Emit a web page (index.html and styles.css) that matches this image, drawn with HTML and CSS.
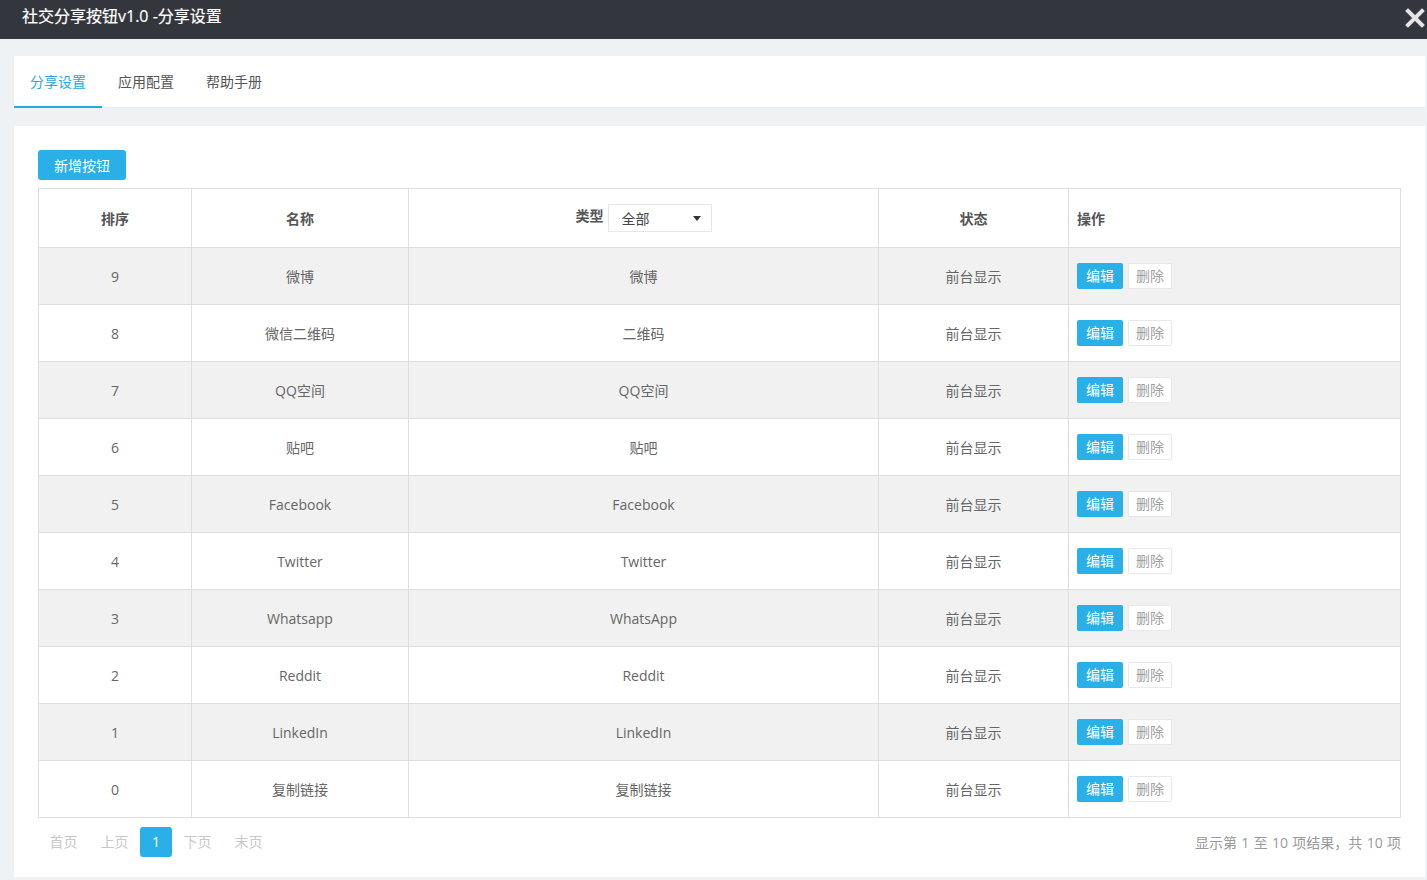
FILE: index.html
```html
<!DOCTYPE html>
<html lang="zh-CN">
<head>
<meta charset="utf-8">
<title>社交分享按钮v1.0 -分享设置</title>
<link rel="stylesheet" href="styles.css">
</head>
<body>
<header class="titlebar">
  <span class="title">社交分享按钮v1.0 -分享设置</span>
  <span class="close" aria-label="关闭">
    <svg width="20" height="20" viewBox="0 0 20 20"><path d="M3 3 L17 17 M17 3 L3 17" stroke="#e4e4e4" stroke-width="4" stroke-linecap="square"/></svg>
  </span>
</header>
<main class="wrap">
  <nav class="tabs">
    <a class="tab active">分享设置</a>
    <a class="tab">应用配置</a>
    <a class="tab">帮助手册</a>
  </nav>
  <section class="card">
    <button class="btn-add">新增按钮</button>
    <table class="grid">
      <colgroup>
        <col class="c1"><col class="c2"><col class="c3"><col class="c4"><col class="c5">
      </colgroup>
      <thead>
        <tr>
          <th>排序</th>
          <th>名称</th>
          <th><span class="type-label">类型</span><span class="select">全部<i class="caret"></i></span></th>
          <th>状态</th>
          <th class="left">操作</th>
        </tr>
      </thead>
      <tbody>
        <tr><td>9</td><td>微博</td><td>微博</td><td>前台显示</td><td class="left"><span class="btn-edit">编辑</span><span class="btn-del">删除</span></td></tr>
        <tr><td>8</td><td>微信二维码</td><td>二维码</td><td>前台显示</td><td class="left"><span class="btn-edit">编辑</span><span class="btn-del">删除</span></td></tr>
        <tr><td>7</td><td>QQ空间</td><td>QQ空间</td><td>前台显示</td><td class="left"><span class="btn-edit">编辑</span><span class="btn-del">删除</span></td></tr>
        <tr><td>6</td><td>贴吧</td><td>贴吧</td><td>前台显示</td><td class="left"><span class="btn-edit">编辑</span><span class="btn-del">删除</span></td></tr>
        <tr><td>5</td><td>Facebook</td><td>Facebook</td><td>前台显示</td><td class="left"><span class="btn-edit">编辑</span><span class="btn-del">删除</span></td></tr>
        <tr><td>4</td><td>Twitter</td><td>Twitter</td><td>前台显示</td><td class="left"><span class="btn-edit">编辑</span><span class="btn-del">删除</span></td></tr>
        <tr><td>3</td><td>Whatsapp</td><td>WhatsApp</td><td>前台显示</td><td class="left"><span class="btn-edit">编辑</span><span class="btn-del">删除</span></td></tr>
        <tr><td>2</td><td>Reddit</td><td>Reddit</td><td>前台显示</td><td class="left"><span class="btn-edit">编辑</span><span class="btn-del">删除</span></td></tr>
        <tr><td>1</td><td>LinkedIn</td><td>LinkedIn</td><td>前台显示</td><td class="left"><span class="btn-edit">编辑</span><span class="btn-del">删除</span></td></tr>
        <tr><td>0</td><td>复制链接</td><td>复制链接</td><td>前台显示</td><td class="left"><span class="btn-edit">编辑</span><span class="btn-del">删除</span></td></tr>
      </tbody>
    </table>
    <div class="footer">
      <div class="pager">
        <span class="pg">首页</span>
        <span class="pg">上页</span>
        <span class="pg current">1</span>
        <span class="pg">下页</span>
        <span class="pg">末页</span>
      </div>
      <div class="info">显示第 1 至 10 项结果，共 10 项</div>
    </div>
  </section>
</main>
</body>
</html>
```
FILE: styles.css
```css
* { box-sizing: border-box; }
html, body { margin: 0; padding: 0; }
body {
  background: #eef2f5;
  font-family: "Open Sans", "Noto Sans CJK SC", sans-serif;
  font-size: 14px;
  color: #666;
}
.titlebar {
  height: 39px;
  background: #33363d;
  display: flex;
  align-items: flex-start;
  justify-content: space-between;
  padding: 0 2px 0 22px;
}
.title {
  color: #fff;
  font-size: 16px;
  line-height: 32px;
  -webkit-text-stroke: 0.2px #fff;
}
.close { display: flex; padding-top: 8px; }
.wrap { padding: 17px 2px 0 14px; }
.tabs {
  height: 52px;
  background: #fff;
  display: flex;
  border-bottom: 1px solid #e9eef2;
}
.tab {
  padding: 0 16px;
  line-height: 52px;
  height: 52px;
  color: #555;
  font-size: 14px;
}
.tab.active {
  color: #29a8e0;
  border-bottom: 2px solid #29a8e0;
}
.card {
  margin-top: 18px;
  background: #fff;
  padding: 24px 24px 20px 24px;
  height: 751px;
}
.btn-add {
  display: block;
  width: 88px;
  height: 30px;
  border: none;
  border-radius: 3px;
  background: #29b0e8;
  color: #fff;
  font-family: inherit;
  font-size: 14px;
  padding: 0;
  margin-bottom: 8px;
}
.grid {
  width: 100%;
  border-collapse: collapse;
  border: 1px solid #dcdcdc;
  table-layout: fixed;
}
.c1 { width: 153px; }
.c2 { width: 217px; }
.c3 { width: 470px; }
.c4 { width: 190px; }
.grid th, .grid td {
  border: 1px solid #dedede;
  text-align: center;
  padding: 0 8px;
}
.grid th {
  height: 59px;
  font-weight: bold;
  color: #555;
  font-size: 14px;
}
.grid td { height: 57px; color: #666; }
.grid tbody tr:nth-child(odd) td { background: #f1f1f1; }
.grid .left { text-align: left; }
.type-label { vertical-align: middle; position: relative; top: -3px; }
.select {
  display: inline-flex;
  align-items: center;
  justify-content: space-between;
  width: 104px;
  height: 28px;
  margin-left: 4px;
  padding: 0 10px 0 13px;
  border: 1px solid #e6e6e6;
  font-weight: normal;
  color: #444;
  vertical-align: middle;
}
.caret {
  width: 0; height: 0;
  border-left: 4px solid transparent;
  border-right: 4px solid transparent;
  border-top: 5px solid #333;
}
.btn-edit, .btn-del {
  display: inline-block;
  height: 26px;
  line-height: 26px;
  font-size: 14px;
  border-radius: 2px;
  vertical-align: middle;
}
.btn-edit {
  width: 46px;
  text-align: center;
  background: #29b0e8;
  color: #fff;
}
.btn-del {
  width: 44px;
  text-align: center;
  margin-left: 5px;
  background: #fff;
  border: 1px solid #e8e8e8;
  line-height: 24px;
  color: #a0a0a0;
}
.footer {
  display: flex;
  justify-content: space-between;
  align-items: center;
  margin-top: 9px;
}
.pager { display: flex; }
.pg {
  height: 30px;
  line-height: 30px;
  padding: 0 11.5px;
  color: #c8c8c8;
  border-radius: 3px;
}
.pg.current {
  width: 32px;
  padding: 0;
  text-align: center;
  background: #29b0e8;
  color: #fff;
}
.info { color: #999; font-size: 14px; word-spacing: 0.7px; }
```
